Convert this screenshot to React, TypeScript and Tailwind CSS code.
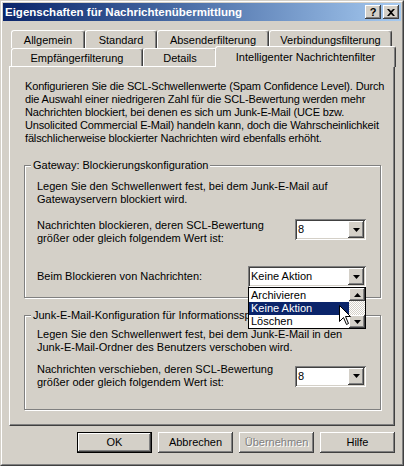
import React from "react";

const raised =
  "shadow-[inset_-1px_-1px_0_#404040,inset_1px_1px_0_#ffffff,inset_-2px_-2px_0_#808080,inset_2px_2px_0_#D4D0C8]";
const sunken =
  "shadow-[inset_1px_1px_0_#808080,inset_-1px_-1px_0_#ffffff,inset_2px_2px_0_#404040,inset_-2px_-2px_0_#D4D0C8]";

function Arrow({ up }: { up?: boolean }) {
  return (
    <svg width="7" height="4" viewBox="0 0 7 4" className="block">
      {up ? (
        <polygon points="3.5,0 7,4 0,4" fill="#000" />
      ) : (
        <polygon points="0,0 7,0 3.5,4" fill="#000" />
      )}
    </svg>
  );
}

function ArrowBtn({ up, h }: { up?: boolean; h: string }) {
  return (
    <div className={`w-[16px] ${h} bg-[#D4D0C8] ${raised} flex items-center justify-center`}>
      <Arrow up={up} />
    </div>
  );
}

function Combo({ value, w, children }: { value: string; w: string; children?: React.ReactNode }) {
  return (
    <div className={`relative ${w} h-[21px] bg-white flex items-center p-[2px] ${sunken}`}>
      <span className="flex-1 pl-[1px] leading-[13px]">{value}</span>
      <ArrowBtn h="h-[17px]" />
      {children}
    </div>
  );
}

function Tab({ label, w, active }: { label: string; w: string; active?: boolean }) {
  return (
    <div
      className={`${w} shrink-0 bg-[#D4D0C8] border-t border-l border-white border-r border-r-[#404040] shadow-[inset_-1px_0_0_#808080] rounded-t-[3px] text-center leading-[13px] whitespace-nowrap ${
        active ? "relative z-10 -mt-[2px] -mx-[2px] h-[21px] pt-[4px]" : "h-[18px] pt-[3px]"
      }`}
    >
      {label}
    </div>
  );
}

function Group({ label, className, children }: { label: string; className: string; children: React.ReactNode }) {
  return (
    <div className={`relative border border-[#808080] shadow-[1px_1px_0_#ffffff,inset_1px_1px_0_#ffffff] ${className}`}>
      <span className="absolute left-[6px] -top-[7px] bg-[#D4D0C8] px-[2px] leading-[13px] whitespace-nowrap">
        {label}
      </span>
      {children}
    </div>
  );
}

function Button({ label, def, disabled }: { label: string; def?: boolean; disabled?: boolean }) {
  return (
    <div
      className={`w-[75px] h-[21px] bg-[#D4D0C8] flex items-center justify-center leading-[13px] ${
        def
          ? "shadow-[inset_0_0_0_1px_#000000,inset_-2px_-2px_0_#404040,inset_2px_2px_0_#ffffff,inset_-3px_-3px_0_#808080]"
          : raised
      } ${disabled ? "text-[#808080] [text-shadow:1px_1px_0_#ffffff]" : ""}`}
    >
      {label}
    </div>
  );
}

function Cursor() {
  return (
    <svg width="13" height="21" viewBox="0 0 13 21" className="absolute left-[90px] top-[17px] z-30">
      <polygon
        points="0.5,0.5 0.5,16.5 4.5,12.5 7.5,19.5 9.5,18.5 6.5,11.5 11.5,11.5"
        fill="#fff"
        stroke="#000"
        strokeWidth="1"
      />
    </svg>
  );
}

export default function App() {
  return (
    <div className="w-[404px] h-[466px] border border-t-[#D4D0C8] border-l-[#D4D0C8] border-r-[#404040] border-b-[#404040] bg-[#D4D0C8] font-['Liberation_Sans',Arial,sans-serif] text-[11px] text-black">
      <div className="h-full border border-t-white border-l-white border-r-[#808080] border-b-[#808080] p-[1px] flex flex-col">
        {/* Title bar */}
        <div className="h-[18px] bg-gradient-to-r from-[#0A246A] to-[#A6CAF0] flex items-center pl-[2px] pr-[2px]">
          <span className="flex-1 text-white font-bold text-[11.5px] leading-[13px] whitespace-nowrap">
            Eigenschaften für Nachrichtenübermittlung
          </span>
          <div className="flex gap-[2px]">
            <div className={`w-[16px] h-[14px] bg-[#D4D0C8] ${raised} flex items-center justify-center font-bold text-[11px] leading-[11px]`}>
              ?
            </div>
            <div className={`w-[16px] h-[14px] bg-[#D4D0C8] ${raised} flex items-center justify-center`}>
              <svg width="8" height="7" viewBox="0 0 8 7">
                <path d="M0 0h2l2 2 2-2h2L5 3.5 8 7H6L4 5 2 7H0l3-3.5z" fill="#000" />
              </svg>
            </div>
          </div>
        </div>

        {/* Body */}
        <div className="flex-1 px-[6px] pt-[9px] flex flex-col">
          <div className="pl-[2px] flex flex-col">
            <div className="flex h-[18px]">
              <Tab label="Allgemein" w="w-[74px]" />
              <Tab label="Standard" w="w-[72px]" />
              <Tab label="Absenderfilterung" w="w-[112px]" />
              <Tab label="Verbindungsfilterung" w="w-[123px]" />
            </div>
            <div className="flex h-[18px] items-start">
              <Tab label="Empfängerfilterung" w="w-[132px]" />
              <Tab label="Details" w="w-[74px]" />
              <Tab label="Intelligenter Nachrichtenfilter" w="w-[181px]" active />
            </div>
          </div>

          {/* Panel */}
          <div className="w-[386px] h-[360px] border-t border-l border-white border-r border-b border-r-[#404040] border-b-[#404040] shadow-[inset_-1px_-1px_0_#808080] pl-[14px] pt-[13px] flex flex-col">
            <p className="pl-[1px] leading-[13px] whitespace-nowrap tracking-[-0.15px]">
              Konfigurieren Sie die SCL-Schwellenwerte (Spam Confidence Level). Durch
              <br />
              die Auswahl einer niedrigeren Zahl für die SCL-Bewertung werden mehr
              <br />
              Nachrichten blockiert, bei denen es sich um Junk-E-Mail (UCE bzw.
              <br />
              Unsolicited Commercial E-Mail) handeln kann, doch die Wahrscheinlichkeit
              <br />
              fälschlicherweise blockierter Nachrichten wird ebenfalls erhöht.
            </p>

            <Group label="Gateway: Blockierungskonfiguration" className="mt-[20px] w-[357px] h-[133px] pl-[12px] pr-[14px] pt-[14px] z-20">
              <p className="leading-[13px]">
                Legen Sie den Schwellenwert fest, bei dem Junk-E-Mail auf
                <br />
                Gatewayservern blockiert wird.
              </p>
              <div className="mt-[13px] flex justify-between items-start">
                <p className="leading-[13px]">
                  Nachrichten blockieren, deren SCL-Bewertung
                  <br />
                  größer oder gleich folgendem Wert ist:
                </p>
                <Combo value="8" w="w-[71px]" />
              </div>
              <div className="mt-[21px] flex justify-between items-center">
                <p className="leading-[13px]">Beim Blockieren von Nachrichten:</p>
                <Combo value="Keine Aktion" w="w-[118px]">
                  <div className="absolute left-0 top-[21px] w-[118px] h-[42px] border border-black bg-white flex z-30">
                    <div className="flex-1 flex flex-col leading-[13px] pt-[1px]">
                      <div className="pl-[2px] h-[13px]">Archivieren</div>
                      <div className="pl-[2px] h-[13px] bg-[#0A246A] text-white">Keine Aktion</div>
                      <div className="pl-[2px] h-[13px]">Löschen</div>
                    </div>
                    <div className="w-[16px] flex flex-col">
                      <ArrowBtn up h="h-[13px]" />
                      <div className="flex-1 bg-[repeating-conic-gradient(#ffffff_0_25%,#D4D0C8_0_50%)] bg-[length:2px_2px]" />
                      <ArrowBtn h="h-[13px]" />
                    </div>
                    <Cursor />
                  </div>
                </Combo>
              </div>
            </Group>

            <Group label="Junk-E-Mail-Konfiguration für Informationsspeicher" className="mt-[17px] w-[357px] h-[95px] pl-[12px] pr-[14px] pt-[12px]">
              <p className="leading-[13px]">
                Legen Sie den Schwellenwert fest, bei dem Junk-E-Mail in den
                <br />
                Junk-E-Mail-Ordner des Benutzers verschoben wird.
              </p>
              <div className="mt-[9px] flex justify-between items-center">
                <p className="leading-[13px]">
                  Nachrichten verschieben, deren SCL-Bewertung
                  <br />
                  größer oder gleich folgendem Wert ist:
                </p>
                <Combo value="8" w="w-[71px]" />
              </div>
            </Group>
          </div>

          {/* Buttons */}
          <div className="mt-[6px] w-[386px] flex justify-end gap-[6px]">
            <Button label="OK" def />
            <Button label="Abbrechen" />
            <Button label="Übernehmen" disabled />
            <Button label="Hilfe" />
          </div>
        </div>
      </div>
    </div>
  );
}
